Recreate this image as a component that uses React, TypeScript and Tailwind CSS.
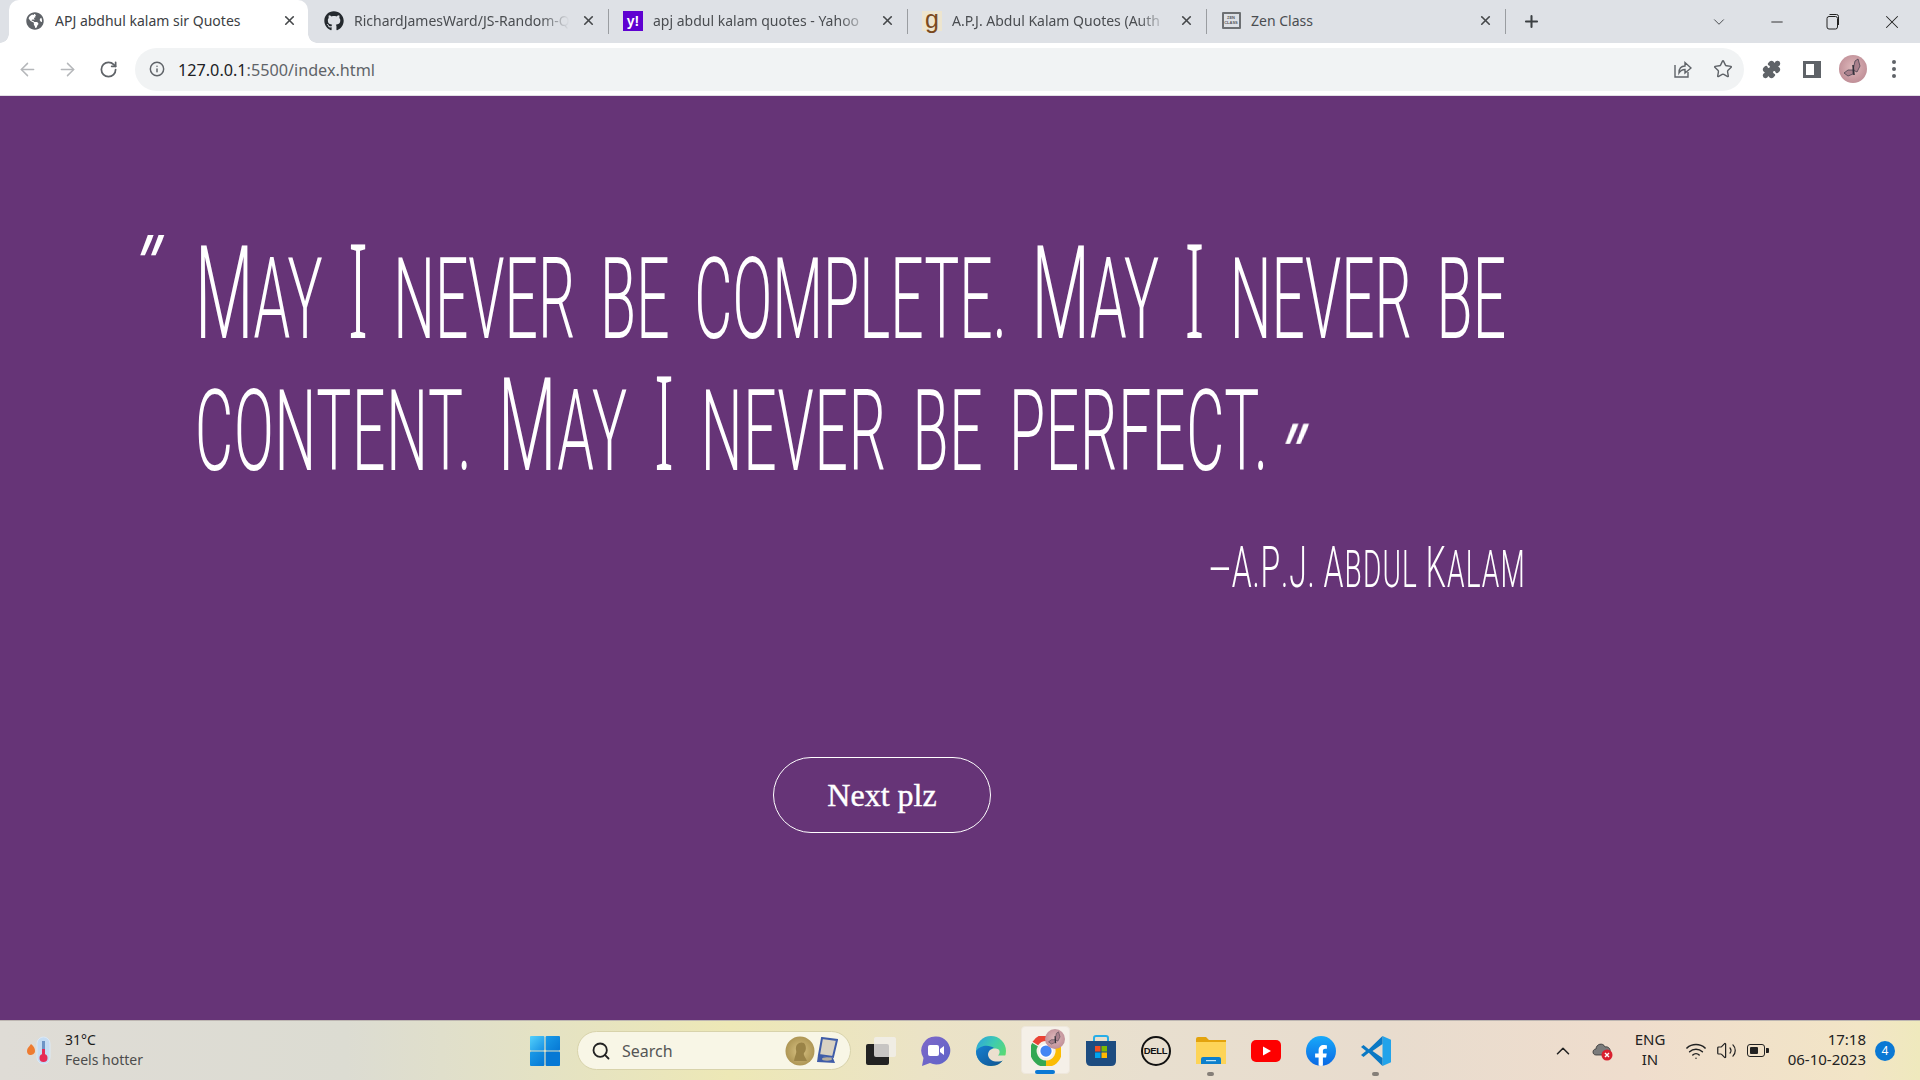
import React from "react";
import { ArrowLeft, ArrowRight, RotateCw, Info, X, Plus, ChevronDown, Minus, Star, Puzzle, Search, ChevronUp, Wifi, Volume2 } from "lucide-react";
import { FaGithub, FaFacebookF, FaGlobeAmericas } from "react-icons/fa";

const Big = ({ children }: { children: React.ReactNode }) => <span className="text-[130px]">{children}</span>;
const Eye = () => <span className="text-[130px] font-light [font-family:'Noto_Sans',sans-serif]">I</span>;
const BigA = ({ children }: { children: React.ReactNode }) => <span className="text-[58px]">{children}</span>;

function Avatar({ size }: { size: number }) {
  return (
    <svg width={size} height={size} viewBox="0 0 28 28" className="shrink-0">
      <defs>
        <radialGradient id={`av${size}`} cx="50%" cy="45%" r="60%">
          <stop offset="0" stopColor="#dfb9bc" />
          <stop offset="1" stopColor="#bd8b94" />
        </radialGradient>
      </defs>
      <circle cx="14" cy="14" r="14" fill={`url(#av${size})`} />
      <path d="M14 15 L16 6 L19 4 L21 11 L18 17 Z M14 15 L9 15 L5 18 L9 21 L14 19 Z" fill="#a9808c" stroke="#4a4350" strokeWidth="0.8" />
      <path d="M14 10 L15 20" stroke="#33303a" strokeWidth="1.6" />
    </svg>
  );
}

function Tab({ icon, title, active, fade }: { icon: React.ReactNode; title: string; active?: boolean; fade?: boolean }) {
  return (
    <div className={`relative flex w-[299px] h-[43px] items-center shrink-0 pb-[2px] ${active ? "bg-white rounded-t-[10px] text-[#3c4043]" : "text-[#4a4d51]"}`}>
      {active && <span className="absolute left-[-9px] bottom-0 w-[9px] h-[9px] bg-[radial-gradient(circle_at_0_0,transparent_8.5px,white_9px)]" />}
      {active && <span className="absolute right-[-9px] bottom-0 w-[9px] h-[9px] bg-[radial-gradient(circle_at_100%_0,transparent_8.5px,white_9px)]" />}
      <span className="ml-[16px] w-[20px] h-[20px] flex items-center justify-center shrink-0">{icon}</span>
      <span className={`ml-[10px] w-[222px] overflow-hidden whitespace-nowrap text-[14px] ${fade ? "[mask-image:linear-gradient(90deg,black_84%,transparent_97%)]" : ""}`}>{title}</span>
      <X size={15} strokeWidth={2.6} className="ml-[5px] text-[#45474a] shrink-0" />
      {!active && <span className="absolute right-[-2px] top-[9px] h-[25px] w-px bg-[#9a9da1]" />}
    </div>
  );
}

function TabStrip() {
  return (
    <div className="h-[43px] bg-[#dee1e6] flex items-center pl-[9px] shrink-0">
      <Tab active icon={<FaGlobeAmericas size={18} className="text-[#5f6368]" />} title="APJ abdhul kalam sir Quotes" />
      <Tab fade icon={<FaGithub size={20} className="text-[#24292e]" />} title="RichardJamesWard/JS-Random-Q" />
      <Tab fade icon={<span className="w-[20px] h-[20px] bg-[#5f01d1] text-white font-bold text-[14px] leading-[20px] text-center [font-family:'Liberation_Sans',sans-serif]">y!</span>} title="apj abdul kalam quotes - Yahoo" />
      <Tab fade icon={<span className="w-[20px] h-[20px] bg-[#ede5cf] text-[#7b4a1e] text-[25px] leading-[16px] text-center [font-family:'Liberation_Sans',sans-serif]">g</span>} title="A.P.J. Abdul Kalam Quotes (Auth" />
      <Tab icon={<span className="w-[19px] h-[17px] border-2 border-[#6d7073] rounded-[1px] text-[#55585b] text-[4px] leading-[5px] font-bold text-center pt-[1px] [font-family:'Liberation_Sans',sans-serif]">ZEN<br />CLASS</span>} title="Zen Class" />
      <Plus size={19} strokeWidth={2.6} className="ml-[18px] text-[#3c4043]" />
      <ChevronDown size={18} strokeWidth={1.2} className="ml-[169px] text-[#3c4043]" />
      <Minus size={18} strokeWidth={1.2} className="ml-[40px] text-[#222]" />
      <svg width="14" height="17" viewBox="0 0 14 17" className="ml-[40px] text-[#222]" fill="none" stroke="currentColor">
        <rect x="1" y="3.5" width="10.500" height="12.500" rx="2" />
        <path d="M3.5 1.5 H10.5 Q12.5 1.5 12.5 3.5 V12" />
      </svg>
      <X size={22} strokeWidth={1.1} className="ml-[41px] text-[#222]" />
    </div>
  );
}

function Toolbar() {
  return (
    <div className="h-[53px] bg-white flex items-center shrink-0 border-b border-[#e3dfe6]">
      <ArrowLeft size={21} strokeWidth={1.7} className="ml-[17px] text-[#b5b7ba]" />
      <ArrowRight size={21} strokeWidth={1.7} className="ml-[19px] text-[#b5b7ba]" />
      <RotateCw size={19} strokeWidth={2.2} className="ml-[21px] text-[#5f6368]" />
      <div className="ml-[17px] w-[1609px] h-[43px] rounded-full bg-[#f1f3f4] flex items-center">
        <Info size={16} strokeWidth={2.2} className="ml-[14px] text-[#5f6368]" />
        <span className="ml-[13px] pt-[2px] text-[16.2px] text-[#5f6368] [font-family:'Noto_Sans',sans-serif]">
          <span className="text-[#202124]">127.0.0.1</span>:5500/index.html
        </span>
        <svg width="20" height="20" viewBox="0 0 20 20" fill="none" stroke="#5f6368" strokeWidth="1.4" className="ml-auto mr-[1px]">
          <path d="M3 6 V18 H16 V13" />
          <path d="M7 14 C7 9 10 7 13 7 V3.5 L19 9 L13 14 V10.5 C10.5 10.5 8.5 11.5 7 14 Z" />
        </svg>
        <Star size={20} strokeWidth={1.7} className="ml-[20px] mr-[11px] text-[#5f6368]" />
      </div>
      <Puzzle size={19} strokeWidth={2} className="ml-[18px] text-[#5f6368] fill-[#5f6368]" />
      <span className="ml-[22px] w-[18px] h-[17px] border-[3px] border-[#5f6368] border-r-[7px] shrink-0" />
      <span className="ml-[18px]"><Avatar size={28} /></span>
      <span className="ml-[25px] flex flex-col gap-[3px]">
        <span className="w-[4px] h-[4px] rounded-full bg-[#5f6368]" />
        <span className="w-[4px] h-[4px] rounded-full bg-[#5f6368]" />
        <span className="w-[4px] h-[4px] rounded-full bg-[#5f6368]" />
      </span>
    </div>
  );
}

function Quote() {
  return (
    <main className="flex-1 bg-[#663477] text-white min-h-0 pl-[129px] pt-[126px]">
      <div className="flex h-[132px] whitespace-nowrap">
        <span className="w-[66px] shrink-0 mt-[6px] italic font-normal text-[84px] leading-[84px] [font-family:Roboto,sans-serif]"><span className="inline-block -skew-x-12">"</span></span>
        <div className="origin-left scale-x-[0.52] uppercase font-light text-[113px] leading-[132px] [word-spacing:20px] [font-family:Roboto,sans-serif]">
          <Big>M</Big>ay <Eye /> never be complete. <Big>M</Big>ay <Eye /> never be
        </div>
      </div>
      <div className="flex h-[132px] whitespace-nowrap">
        <span className="w-[66px] shrink-0" />
        <div className="origin-left scale-x-[0.52] uppercase font-light text-[113px] leading-[132px] tracking-[1.5px] [word-spacing:20px] [font-family:Roboto,sans-serif]">
          content. <Big>M</Big>ay <Eye /> never be perfect. <span className="inline-block italic font-normal text-[84px] relative top-[16px] -skew-x-12 scale-x-[1.9] ml-[-26px]">"</span>
        </div>
      </div>
      <div className="ml-[1080px] mt-[51px] h-[60px] whitespace-nowrap origin-left scale-x-[0.55] uppercase font-light text-[51px] leading-[60px] tracking-[2px] [font-family:Roboto,sans-serif]">
        —<BigA>A</BigA>.<BigA>P</BigA>.<BigA>J</BigA>. <BigA>A</BigA>bdul <BigA>K</BigA>alam
      </div>
      <button className="block ml-[644px] mt-[160px] w-[218px] h-[76px] rounded-[38px] border border-white text-[32px] [-webkit-text-stroke:0.4px_white] [font-family:'Liberation_Serif',serif]">
        Next plz
      </button>
    </main>
  );
}

function WinLogo() {
  return (
    <svg width="30" height="30" viewBox="0 0 30 30">
      <defs>
        <linearGradient id="w1" x1="0" y1="0" x2="1" y2="1"><stop offset="0" stopColor="#53d0fb" /><stop offset="1" stopColor="#1791e4" /></linearGradient>
        <linearGradient id="w2" x1="0" y1="0" x2="1" y2="1"><stop offset="0" stopColor="#1a9be8" /><stop offset="1" stopColor="#0678d4" /></linearGradient>
      </defs>
      <rect x="0" y="0" width="14.4" height="14.4" rx="1" fill="url(#w1)" />
      <rect x="15.6" y="0" width="14.4" height="14.4" rx="1" fill="url(#w2)" />
      <rect x="0" y="15.6" width="14.4" height="14.4" rx="1" fill="url(#w2)" />
      <rect x="15.6" y="15.6" width="14.4" height="14.4" rx="1" fill="#0678d4" />
    </svg>
  );
}

const Cell = ({ children }: { children: React.ReactNode }) => <div className="relative w-[55px] h-full flex items-center justify-center shrink-0">{children}</div>;

function Taskbar() {
  return (
    <footer className="h-[60px] shrink-0 border-t border-[#bdb6b2] flex items-center bg-[linear-gradient(90deg,#dfdcd6_0%,#dcdcd2_18%,#e4e2c4_28%,#ede8b6_38%,#ebe3c6_48%,#e8dfcf_60%,#e8dcce_72%,#efddcd_85%,#f2e5c6_97%,#efe9bd_100%)] [font-family:'Noto_Sans',sans-serif]">
      <div className="w-[517px] h-full flex items-center shrink-0">
        <svg width="26" height="30" viewBox="0 0 26 30" className="ml-[26px] shrink-0">
          <rect x="11" y="1" width="13" height="27" rx="6.5" fill="#c5dcf3" stroke="#dce9f6" />
          <rect x="16" y="5" width="3" height="15" fill="#6d94c6" />
          <rect x="16" y="13" width="3" height="9" fill="#e62a57" />
          <circle cx="17.5" cy="22" r="4" fill="#e62a57" />
          <path d="M5 8 C8 10 9 13 9 15 C9 18 6 19 4.500 19 C2 19 1 17 1 15 C1 12 3 11 5 8 Z" fill="#ee7b30" />
        </svg>
        <div className="ml-[13px] flex flex-col text-[14px] leading-[20px] pb-[2px]">
          <span className="text-[#1b1b1b]">31°C</span>
          <span className="text-[#4c4c4c]">Feels hotter</span>
        </div>
      </div>
      <Cell><WinLogo /></Cell>
      <div className="ml-[5px] w-[274px] h-[39px] rounded-full bg-[#f8f6e6] border border-[#d8d3ab] flex items-center shrink-0">
        <Search size={20} strokeWidth={2.2} className="ml-[13px] text-[#222]" />
        <span className="ml-[11px] text-[16px] text-[#555]">Search</span>
        <svg width="30" height="30" viewBox="0 0 30 30" className="ml-auto">
          <defs>
            <radialGradient id="md"><stop offset="0" stopColor="#d8c283" /><stop offset="1" stopColor="#ae9655" /></radialGradient>
          </defs>
          <circle cx="15" cy="15" r="14.500" fill="url(#md)" />
          <path d="M9 25 C10 19 12 17 11 14 C10 8 15 5 19 7 C21 9 22 14 19 17 C18 19 21 22 22 25 Z" fill="#9a8347" />
        </svg>
        <svg width="22" height="28" viewBox="0 0 22 28" className="mr-[12px] ml-[1px]">
          <path d="M6 1 L21 3 L17 20 L3 18 Z" fill="#d9d2c3" stroke="#3f5ca8" strokeWidth="2" />
          <path d="M2 18 L17 21 L19 26 L1 25 Z" fill="#3f5ca8" />
          <ellipse cx="11" cy="22" rx="5" ry="1.700" fill="#b5ad9e" />
        </svg>
      </div>
      <div className="w-[2px] shrink-0" />
      <Cell>
        <span className="relative w-[30px] h-[28px] block">
          <span className="absolute left-0 bottom-0 w-[23px] h-[21px] rounded-[2px] bg-[#222]" />
          <span className="absolute right-0 top-0 w-[22px] h-[20px] rounded-[2px] bg-[#f1efec]/80" />
        </span>
      </Cell>
      <Cell>
        <svg width="30" height="30" viewBox="0 0 30 30">
          <defs><linearGradient id="ch" x1="0" y1="0" x2="1" y2="1"><stop offset="0" stopColor="#7f68c9" /><stop offset="1" stopColor="#5d63c8" /></linearGradient></defs>
          <path d="M15 0.500 A14 14 0 1 1 9 27 L1 30 L2.500 22 A14 14 0 0 1 15 0.500 Z" fill="url(#ch)" />
          <rect x="7" y="9" width="11" height="11" rx="2" fill="#fff" />
          <path d="M19 13 L23 10 V19 L19 16 Z" fill="#fff" />
        </svg>
      </Cell>
      <Cell>
        <svg width="30" height="30" viewBox="0 0 30 30">
          <defs>
            <linearGradient id="e1" x1="0" y1="0" x2="1" y2="0.700"><stop offset="0" stopColor="#2b9fe3" /><stop offset="0.500" stopColor="#3ecbb0" /><stop offset="1" stopColor="#5fdc6a" /></linearGradient>
            <linearGradient id="e2" x1="0" y1="0" x2="1" y2="1"><stop offset="0" stopColor="#1680d2" /><stop offset="1" stopColor="#11548f" /></linearGradient>
          </defs>
          <circle cx="15" cy="15" r="15" fill="url(#e1)" />
          <path d="M0 15 C0 24 7 30 15 30 C21 30 25 27 27 24 C22 26 15 25 13 20 C12 16 15 12 18 12 C14 9 5 8 0 15 Z" fill="url(#e2)" />
          <path d="M12 19 C12 14 16 12 20 12.500 C25 13 24 18 22 19.500 L30 19.500 L28 24 C22 27 13 26 12 19 Z" fill="#ebe0cf" />
        </svg>
      </Cell>
      <Cell>
        <span className="absolute left-[3px] top-[5px] w-[49px] h-[48px] rounded-[4px] bg-[#f5f0e8] border border-[#eee7dc]" />
        <svg width="30" height="30" viewBox="0 0 32 32" fill="none" className="relative">
          <path d="M4.600 8 A13.500 13.500 0 0 1 27.400 8" stroke="#ea4335" strokeWidth="7" />
          <path d="M16 29.500 A13.500 13.500 0 0 1 4.300 9.300" stroke="#34a853" strokeWidth="7" />
          <path d="M27.700 9 A13.500 13.500 0 0 1 16 29.500" stroke="#fbbc04" strokeWidth="7" />
          <circle cx="16" cy="16" r="7.500" fill="#fff" />
          <circle cx="16" cy="16" r="6" fill="#4285f4" />
        </svg>
        <span className="absolute left-[27px] top-[8px]"><Avatar size={20} /></span>
        <span className="absolute left-[17px] bottom-[6px] w-[20px] h-[4px] rounded-full bg-[#0a78d4]" />
      </Cell>
      <Cell>
        <svg width="30" height="32" viewBox="0 0 30 32">
          <path d="M8 7 V3 Q8 1 10 1 H20 Q22 1 22 3 V7" fill="none" stroke="#27aee8" strokeWidth="2" />
          <path d="M0 6 H30 V26 Q30 31 25 31 H5 Q0 31 0 26 Z" fill="#1d4c80" />
          <rect x="9" y="11" width="5.500" height="5.500" fill="#f25022" />
          <rect x="15.500" y="11" width="5.500" height="5.500" fill="#7fba00" />
          <rect x="9" y="17.500" width="5.500" height="5.500" fill="#00a4ef" />
          <rect x="15.500" y="17.500" width="5.500" height="5.500" fill="#ffb900" />
        </svg>
      </Cell>
      <Cell>
        <span className="w-[30px] h-[30px] rounded-full border-2 border-[#111] flex items-center justify-center text-[9.500px] leading-none font-bold text-[#111] tracking-[-0.3px] [font-family:'Liberation_Sans',sans-serif]">DELL</span>
      </Cell>
      <Cell>
        <svg width="30" height="28" viewBox="0 0 30 28">
          <path d="M0 2 Q0 0 2 0 H10 L13 3 H30 V8 H0 Z" fill="#e3a30d" />
          <path d="M0 5 H30 V27 H0 Z" fill="#fdd458" />
          <path d="M5 27 V22 Q5 20 7 20 H23 Q25 20 25 22 V27 Z" fill="#0c7fcc" />
          <rect x="10" y="23" width="10" height="1.200" fill="#bfe3f6" />
        </svg>
        <span className="absolute left-[24px] bottom-[4px] w-[7px] h-[4px] rounded-full bg-[#857f78]" />
      </Cell>
      <Cell>
        <svg width="30" height="22" viewBox="0 0 30 22">
          <rect width="30" height="22" rx="5" fill="#fe0000" />
          <path d="M12 6.500 L20 11 L12 15.500 Z" fill="#fff" />
        </svg>
      </Cell>
      <Cell>
        <span className="w-[30px] h-[30px] rounded-full bg-[linear-gradient(180deg,#18a9f9,#0a68e4)] flex items-end justify-center overflow-hidden">
          <FaFacebookF size={22} className="text-white mb-[-1px]" />
        </span>
      </Cell>
      <Cell>
        <svg width="30" height="30" viewBox="0 0 30 30">
          <path d="M21.500 0 L30 3.800 V26.200 L21.500 30 Z" fill="#22a3ea" />
          <path d="M21.500 0 L6 15 L21.500 30 L21.500 22 L11.500 15 L21.500 8 Z" fill="#0a78c4" />
          <path d="M2.500 9 L0 11 L5 15 L0 19 L2.500 21 L8 16.500 L8 13.500 Z" fill="#0a78c4" />
        </svg>
        <span className="absolute left-[24px] bottom-[4px] w-[7px] h-[4px] rounded-full bg-[#857f78]" />
      </Cell>
      <div className="flex-1 h-full flex items-center min-w-0">
        <ChevronUp size={22} strokeWidth={1.7} className="ml-[149px] text-[#222] shrink-0" />
        <svg width="22" height="20" viewBox="0 0 22 20" className="ml-[18px] shrink-0">
          <path d="M4 14 C0 14 0 8 4 8 C4 3 11 1 13 6 C16 5 19 8 18 11 L18 14 Z" fill="#7b7b7b" stroke="#333" strokeWidth="0.800" />
          <circle cx="15" cy="14" r="5.500" fill="#d9202f" />
          <path d="M13 12 L17 16 M17 12 L13 16" stroke="#fff" strokeWidth="1.400" />
        </svg>
        <div className="ml-[18px] w-[36px] text-center text-[15px] leading-[20px] text-[#222] shrink-0 pb-[3px]">ENG<br />IN</div>
        <Wifi size={22} strokeWidth={1.6} className="ml-[17px] text-[#222] shrink-0" />
        <Volume2 size={21} strokeWidth={1.4} className="ml-[9px] text-[#222] shrink-0" />
        <span className="ml-[10px] relative w-[18px] h-[13px] border-[1.500px] border-[#222] rounded-[3px] shrink-0 flex items-center pl-[2px]">
          <span className="w-[8px] h-[7px] bg-[#222] rounded-[1px]" />
          <span className="absolute right-[-4.500px] w-[2.500px] h-[5px] bg-[#222] rounded-r-[1px]" />
        </span>
        <div className="ml-auto text-right text-[15px] leading-[20px] text-[#222] shrink-0 pb-[3px]">17:18<br />06-10-2023</div>
        <span className="ml-[9px] mr-[25px] w-[20px] h-[20px] rounded-full bg-[#0a78d4] text-white text-[12px] leading-[20px] text-center shrink-0">4</span>
      </div>
    </footer>
  );
}

export default function App() {
  return (
    <div className="h-screen w-full overflow-hidden flex flex-col [font-family:'Noto_Sans',sans-serif]">
      <TabStrip />
      <Toolbar />
      <Quote />
      <Taskbar />
    </div>
  );
}
